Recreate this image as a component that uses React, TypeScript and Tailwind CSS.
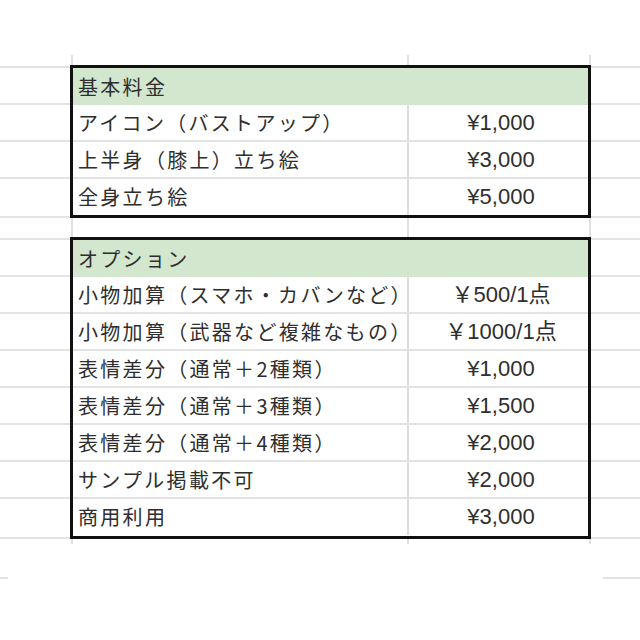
import React from "react";

const jp = { fontFamily: '"Noto Sans CJK JP", "Noto Sans", sans-serif' };

type Item = { name: string; price: string };

const table1: Item[] = [
  { name: "アイコン（バストアップ）", price: "¥1,000" },
  { name: "上半身（膝上）立ち絵", price: "¥3,000" },
  { name: "全身立ち絵", price: "¥5,000" },
];

const table2: Item[] = [
  { name: "小物加算（スマホ・カバンなど）", price: "￥500/1点" },
  { name: "小物加算（武器など複雑なもの）", price: "￥1000/1点" },
  { name: "表情差分（通常＋2種類）", price: "¥1,000" },
  { name: "表情差分（通常＋3種類）", price: "¥1,500" },
  { name: "表情差分（通常＋4種類）", price: "¥2,000" },
  { name: "サンプル掲載不可", price: "¥2,000" },
  { name: "商用利用", price: "¥3,000" },
];

function SideCells({ heights }: { heights: number[] }) {
  return (
    <div className="flex flex-col">
      {heights.map((h, i) => (
        <div
          key={i}
          className="box-border border-b-2 border-[#e3e3e3]"
          style={{ height: h }}
        />
      ))}
    </div>
  );
}

function VLines({ h }: { h: number }) {
  return (
    <div className="flex w-[521px] shrink-0" style={{ height: h }}>
      <div className="w-[1px]" />
      <div className="w-[2px] bg-[#e0e0e0]" />
      <div className="w-[334px]" />
      <div className="w-[2px] bg-[#e0e0e0]" />
      <div className="w-[180px]" />
      <div className="w-[2px] bg-[#e0e0e0]" />
    </div>
  );
}

function PriceTable({ title, items }: { title: string; items: Item[] }) {
  return (
    <div className="w-[521px] shrink-0 box-border border-[3px] border-[#111]">
      <div className="h-[37px] bg-[#d2e7ce] flex items-center pl-[5px] text-[20px] tracking-[2.3px] leading-none text-[#2e2e2e]">
        {title}
      </div>
      {items.map((it, i) => {
        const last = i === items.length - 1;
        return (
          <div
            key={i}
            className={
              last
                ? "h-[36px] flex box-border"
                : "h-[37px] flex box-border border-b-2 border-[#e3e3e3]"
            }
          >
            <div className="w-[334px] shrink-0 flex items-center pl-[5px] text-[20px] leading-none text-[#2e2e2e] whitespace-nowrap">
              <span className="tracking-[2.3px] -mr-[4px]">{it.name}</span>
            </div>
            <div
              className="flex-1 box-border border-l-2 border-[#dcdcdc] flex items-center justify-center text-[22px] leading-none text-[#2e2e2e] whitespace-nowrap pl-[5px]"
              style={{ fontFamily: '"Liberation Sans", "Noto Sans CJK JP", sans-serif' }}
            >
              {it.price}
            </div>
          </div>
        );
      })}
    </div>
  );
}

export default function App() {
  const t1Side = [3, 37, 37, 37, 39];
  const t2Side = [3, 37, 37, 37, 37, 37, 37, 37, 40];
  return (
    <div className="w-[640px] h-[640px] bg-white overflow-hidden flex flex-col" style={jp}>
      <div className="h-[55px] shrink-0" />
      <div className="flex h-[10px] shrink-0">
        <div className="w-[70px] shrink-0" />
        <VLines h={10} />
        <div className="flex-1" />
      </div>
      <div className="flex shrink-0">
        <div className="w-[70px] shrink-0">
          <SideCells heights={t1Side} />
        </div>
        <PriceTable title="基本料金" items={table1} />
        <div className="flex-1">
          <SideCells heights={t1Side} />
        </div>
      </div>
      <div className="flex h-[19px] shrink-0">
        <div className="w-[70px] shrink-0" />
        <VLines h={19} />
        <div className="flex-1" />
      </div>
      <div className="flex shrink-0">
        <div className="w-[70px] shrink-0">
          <SideCells heights={t2Side} />
        </div>
        <PriceTable title="オプション" items={table2} />
        <div className="flex-1">
          <SideCells heights={t2Side} />
        </div>
      </div>
      <div className="flex h-[5px] shrink-0">
        <div className="w-[70px] shrink-0" />
        <VLines h={5} />
        <div className="flex-1" />
      </div>
      <div className="h-[33px] shrink-0" />
      <div className="flex h-[2px] shrink-0">
        <div className="w-[8px] bg-[#e3e3e3]" />
        <div className="w-[595px]" />
        <div className="flex-1 bg-[#e3e3e3]" />
      </div>
    </div>
  );
}
